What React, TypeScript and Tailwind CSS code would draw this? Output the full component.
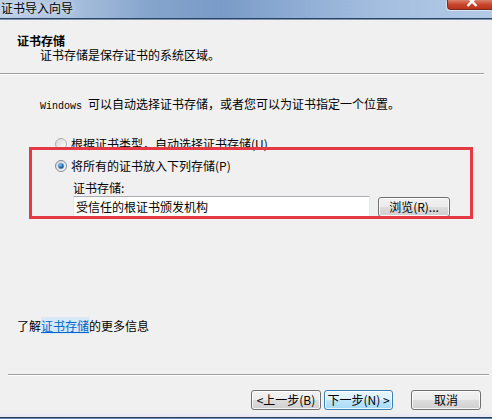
import React from "react";

const font = { fontFamily: '"Noto Sans CJK SC", "Liberation Sans", sans-serif' };

function Radio({ checked }: { checked: boolean }) {
  return (
    <svg width="12" height="12" viewBox="0 0 12 12" className="shrink-0">
      <defs>
        <linearGradient id={checked ? "rgc" : "rgu"} x1="0" y1="0" x2="1" y2="1">
          <stop offset="0" stopColor="#d6d6d6" />
          <stop offset="1" stopColor="#ffffff" />
        </linearGradient>
        <radialGradient id="dot" cx="0.4" cy="0.35" r="0.7">
          <stop offset="0" stopColor="#8fd0f7" />
          <stop offset="0.5" stopColor="#2b72b8" />
          <stop offset="1" stopColor="#1b3f6e" />
        </radialGradient>
      </defs>
      <circle cx="6" cy="6" r="5.5" fill={checked ? "url(#rgc)" : "url(#rgu)"} stroke={checked ? "#7a8a9a" : "#b0b0b0"} />
      {checked && <circle cx="6" cy="6" r="3" fill="url(#dot)" stroke="#9cc8e6" strokeWidth="0.6" />}
    </svg>
  );
}

function WinButton({ children, w, primary }: { children: React.ReactNode; w: string; primary?: boolean }) {
  return (
    <div
      className={`${w} h-[20px] rounded-[3px] border flex items-center justify-center text-[12px] leading-none text-black shadow-[inset_0_0_0_1px_rgba(255,255,255,0.8)] ${
        primary
          ? "border-[#3c7fb1] bg-[linear-gradient(to_bottom,#eaf6fd_0%,#d9f0fc_50%,#bee6fd_51%,#a7d9f5_100%)]"
          : "border-[#707070] bg-[linear-gradient(to_bottom,#f2f2f2_0%,#ebebeb_50%,#dddddd_51%,#cfcfcf_100%)]"
      }`}
    >
      {children}
    </div>
  );
}

export default function App() {
  return (
    <div className="w-[492px] h-[419px] bg-[#f0f0f0] flex flex-col overflow-hidden relative" style={font}>
      {/* Title bar */}
      <div className="h-[18px] shrink-0 flex items-start justify-between bg-[linear-gradient(to_right,#bccfe6_0%,#aac1de_14%,#86a5cd_30%,#7a9bc8_45%,#8eacd4_60%,#a5bfe0_78%,#b3cae7_100%)]">
        <div className="ml-[1px] mt-[1px] text-[12px] leading-[14px] text-black [text-shadow:0_0_6px_rgba(255,255,255,0.9)]">
          证书导入向导
        </div>
        <div className="w-[45px] h-[10px] rounded-bl-[4px] border-l border-b border-[#7a2b1e] bg-[linear-gradient(to_bottom,#d9826a_0%,#c9452c_50%,#b83318_100%)] shadow-[-1px_1px_0_0_rgba(255,255,255,0.5)]">
          <svg width="44" height="10" viewBox="0 0 44 10">
            <path d="M19.5 -3 L28.5 6 M28.5 -3 L19.5 6" stroke="#ffffff" strokeWidth="2.4" />
          </svg>
        </div>
      </div>
      <div className="h-[1px] shrink-0 bg-[#2b4466]" />
      <div className="h-[1px] shrink-0 bg-[#8194ad]" />

      {/* Header */}
      <div className="mt-[14px] pl-[17px] text-[12px] leading-[14px] font-bold text-black">证书存储</div>
      <div className="pl-[40px] text-[12px] leading-[14px] text-black">证书存储是保存证书的系统区域。</div>
      <div className="mt-[11px] w-[484px] h-[1px] bg-[#a0a0a0]" />
      <div className="w-[484px] h-[1px] bg-white" />

      {/* Body */}
      <div className="mt-[22px] pl-[40px] text-[12px] leading-[14px] text-black whitespace-nowrap">
        <span className="text-[10px]" style={{ fontFamily: '"Liberation Mono", monospace' }}>Windows </span>
        可以自动选择证书存储，或者您可以为证书指定一个位置。
      </div>

      <div className="mt-[23px] pl-[55px] flex items-center gap-[4px] text-[12px] leading-[14px] text-black">
        <Radio checked={false} />
        <span>根据证书类型，自动选择证书存储(U)</span>
      </div>
      <div className="mt-[8px] pl-[55px] flex items-center gap-[4px] text-[12px] leading-[14px] text-black">
        <Radio checked={true} />
        <span>将所有的证书放入下列存储(P)</span>
      </div>
      <div className="mt-[8px] pl-[73px] text-[12px] leading-[14px] text-black">证书存储:</div>
      <div className="mt-[1px] pl-[73px] flex items-center">
        <div className="w-[297px] h-[21px] bg-white border border-[#e3e9ef] border-t-[#abadb3] flex items-center pl-[2px] text-[12px] text-black">
          受信任的根证书颁发机构
        </div>
        <div className="ml-[8px]">
          <WinButton w="w-[72px]">浏览(R)...</WinButton>
        </div>
      </div>

      <div className="mt-[102px] pl-[17px] text-[12px] leading-[14px] text-black">
        了解<span className="text-[#0066cc] underline bg-[#d7e8f8]">证书存储</span>的更多信息
      </div>

      <div className="mt-[41px] ml-[8px] w-[481px] h-[1px] bg-[#a0a0a0]" />
      <div className="ml-[8px] w-[481px] h-[1px] bg-white" />

      <div className="mt-[14px] flex pl-[251px]">
        <WinButton w="w-[70px]">&lt;上一步(B)</WinButton>
        <div className="ml-[3px]">
          <WinButton w="w-[69px]" primary>
            下一步(N) &gt;
          </WinButton>
        </div>
        <div className="ml-[18px]">
          <WinButton w="w-[70px]">取消</WinButton>
        </div>
      </div>

      <div className="mt-[2px] h-[5px] bg-[linear-gradient(to_bottom,#f0f0f0,#e8e6f4)]" />
      <div className="h-[1px] bg-[#2e3f58]" />
      <div className="flex-1 bg-[linear-gradient(to_right,#5f84b8,#6c90c4,#5a80b4)]" />

      {/* Annotation rectangle */}
      <div className="absolute left-[29px] top-[147px] w-[444px] h-[72px] border-[3px] border-[#e53a43] pointer-events-none" />
    </div>
  );
}
